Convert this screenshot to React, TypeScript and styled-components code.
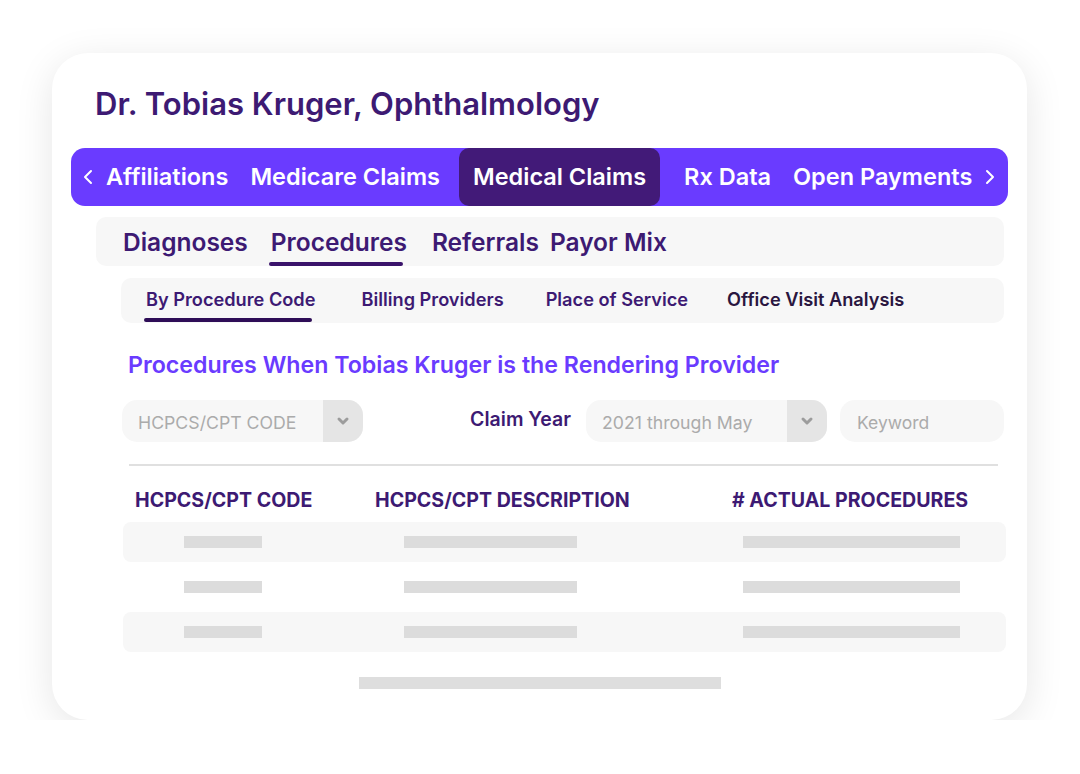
import styled, { createGlobalStyle } from "styled-components";

const GlobalStyle = createGlobalStyle`
  html, body {
    margin: 0;
    padding: 0;
    background: #ffffff;
    font-family: Inter, "Noto Sans", sans-serif;
  }
  * { box-sizing: border-box; }
`;

const mainTabs = [
  { label: "Affiliations" },
  { label: "Medicare Claims" },
  { label: "Medical Claims", active: true },
  { label: "Rx Data" },
  { label: "Open Payments" },
];

const subTabs = [
  { label: "Diagnoses", space: 23 },
  { label: "Procedures", active: true, space: 25 },
  { label: "Referrals", space: 11 },
  { label: "Payor Mix", space: 0 },
];

const innerTabs = [
  { label: "By Procedure Code", active: true, space: 46 },
  { label: "Billing Providers", space: 42 },
  { label: "Place of Service", space: 39 },
  { label: "Office Visit Analysis", dark: true, space: 0 },
];

const rows = [true, false, true];

function Chevron({ dir }: { dir: "left" | "right" }) {
  return (
    <svg width="12" height="18" viewBox="0 0 12 18">
      <polyline
        points={dir === "left" ? "9,3 3,9 9,15" : "3,3 9,9 3,15"}
        fill="none"
        stroke="#fff"
        strokeWidth="2"
        strokeLinecap="round"
        strokeLinejoin="round"
      />
    </svg>
  );
}

function Caret() {
  return (
    <svg width="14" height="10" viewBox="0 0 14 10">
      <polyline
        points="3,3 7,7 11,3"
        fill="none"
        stroke="#9c9c9c"
        strokeWidth="3"
        strokeLinecap="round"
        strokeLinejoin="round"
      />
    </svg>
  );
}

function App() {
  return (
    <>
      <GlobalStyle />
      <Card>
        <Title>Dr. Tobias Kruger, Ophthalmology</Title>

        <MainBar>
          <Arrow>
            <Chevron dir="left" />
          </Arrow>
          {mainTabs.map((t) => (
            <MainTab key={t.label} $active={!!t.active}>
              {t.label}
            </MainTab>
          ))}
          <Arrow>
            <Chevron dir="right" />
          </Arrow>
        </MainBar>

        <SubBar>
          {subTabs.map((t) => (
            <SubTab key={t.label} $active={!!t.active} $space={t.space}>
              {t.label}
            </SubTab>
          ))}
        </SubBar>

        <InnerBar>
          {innerTabs.map((t) => (
            <InnerTab
              key={t.label}
              $active={!!t.active}
              $dark={!!t.dark}
              $space={t.space}
            >
              {t.label}
            </InnerTab>
          ))}
        </InnerBar>

        <Heading>Procedures When Tobias Kruger is the Rendering Provider</Heading>

        <Filters>
          <Select>
            <SelectText>HCPCS/CPT CODE</SelectText>
            <SelectButton>
              <Caret />
            </SelectButton>
          </Select>
          <FilterGroup>
            <FilterLabel>Claim Year</FilterLabel>
            <Select>
              <SelectText>2021 through May</SelectText>
              <SelectButton>
                <Caret />
              </SelectButton>
            </Select>
            <Keyword>Keyword</Keyword>
          </FilterGroup>
        </Filters>

        <Divider />

        <Table>
          <HeaderRow>
            <HeadCell>HCPCS/CPT CODE</HeadCell>
            <HeadCell>HCPCS/CPT DESCRIPTION</HeadCell>
            <HeadCell>#&nbsp;ACTUAL PROCEDURES</HeadCell>
          </HeaderRow>
          {rows.map((shaded, i) => (
            <Row key={i} $shaded={shaded}>
              <Bar $offset={61} $w={78} />
              <Bar $offset={41} $w={173} />
              <Bar $offset={23} $w={217} />
            </Row>
          ))}
        </Table>

        <Pager />
      </Card>
    </>
  );
}

export default App;

const Card = styled.div`
  margin: 53px 0 0 52px;
  width: 975px;
  height: 667px;
  padding: 33px 19px 0;
  background: #fff;
  border-radius: 36px;
  box-shadow: 0 8px 38px rgba(0, 0, 0, 0.1);
  display: flex;
  flex-direction: column;
`;

const Title = styled.h1`
  margin: 0 0 26px 24px;
  font-size: 31px;
  line-height: 36px;
  font-weight: 600;
  color: #3d1a73;
`;

const MainBar = styled.div`
  display: flex;
  align-items: stretch;
  height: 58px;
  padding: 0 10px;
  background: #6a3bff;
  border-radius: 14px;
  white-space: nowrap;
`;

const Arrow = styled.div`
  flex-shrink: 0;
  display: flex;
  align-items: center;
  padding: 0 1px;
`;

const MainTab = styled.div<{ $active: boolean }>`
  flex-shrink: 0;
  display: flex;
  align-items: center;
  padding: 0 ${(p) => (p.$active ? "14px" : "11px")} 2px;
  margin: ${(p) => (p.$active ? "0 13px 0 8px" : "0")};
  font-size: 23.5px;
  font-weight: 600;
  color: #fff;
  border-radius: 10px;
  background: ${(p) => (p.$active ? "#421a78" : "transparent")};
`;

const SubBar = styled.div`
  display: flex;
  align-items: stretch;
  height: 49px;
  margin: 11px 4px 0 25px;
  padding: 0 0 0 27px;
  background: #f7f7f7;
  border-radius: 10px;
  white-space: nowrap;
`;

const SubTab = styled.div<{ $active: boolean; $space: number }>`
  position: relative;
  display: flex;
  align-items: center;
  margin-right: ${(p) => p.$space}px;
  font-size: 24.5px;
  font-weight: 600;
  color: #3d1a73;

  &::after {
    content: "";
    display: ${(p) => (p.$active ? "block" : "none")};
    position: absolute;
    left: -2px;
    right: 4px;
    bottom: 0;
    height: 4px;
    border-radius: 2px;
    background: #3a136b;
  }
`;

const InnerBar = styled.div`
  display: flex;
  align-items: stretch;
  height: 45px;
  margin: 12px 4px 0 50px;
  padding: 0 0 0 25px;
  background: #f7f7f7;
  border-radius: 10px;
  white-space: nowrap;
`;

const InnerTab = styled.div<{ $active: boolean; $dark: boolean; $space: number }>`
  position: relative;
  display: flex;
  align-items: center;
  padding-bottom: 3px;
  margin-right: ${(p) => p.$space}px;
  font-size: 18.2px;
  font-weight: 600;
  color: ${(p) => (p.$dark ? "#2a1640" : "#3d1a73")};

  &::after {
    content: "";
    display: ${(p) => (p.$active ? "block" : "none")};
    position: absolute;
    left: -2px;
    right: 3px;
    bottom: 1px;
    height: 4px;
    border-radius: 2px;
    background: #2e0d57;
  }
`;

const Heading = styled.h2`
  margin: 28px 0 0 57px;
  font-size: 23.2px;
  line-height: 28px;
  font-weight: 600;
  color: #6a3bff;
`;

const Filters = styled.div`
  display: flex;
  justify-content: space-between;
  align-items: center;
  margin: 21px 4px 0 51px;
`;

const FilterGroup = styled.div`
  display: flex;
  align-items: center;
  gap: 13px;
`;

const FilterLabel = styled.span`
  margin: -4px 2px 0 0;
  font-size: 19.5px;
  font-weight: 600;
  color: #3d1a73;
`;

const Select = styled.div`
  display: flex;
  width: 241px;
  height: 42px;
  border-radius: 15px;
  overflow: hidden;
  background: #f7f7f7;
`;

const SelectText = styled.span`
  flex: 1;
  display: flex;
  align-items: center;
  padding: 3px 0 0 16px;
  font-size: 17.7px;
  color: #ababab;
`;

const SelectButton = styled.span`
  display: flex;
  align-items: center;
  justify-content: center;
  width: 40px;
  background: #e5e5e5;
`;

const Keyword = styled.div`
  display: flex;
  align-items: center;
  width: 164px;
  height: 42px;
  padding: 3px 0 0 17px;
  border-radius: 15px;
  background: #f7f7f7;
  font-size: 17.5px;
  color: #ababab;
`;

const Divider = styled.hr`
  margin: 22px 10px 0 58px;
  border: none;
  height: 2px;
  background: #e0e0e0;
`;

const Table = styled.div`
  display: flex;
  flex-direction: column;
  gap: 5px;
  margin: 22px 2px 0 52px;
`;

const columns = "240px 357px 1fr";

const HeaderRow = styled.div`
  display: grid;
  grid-template-columns: ${columns};
  height: 24px;
  margin-bottom: 5px;
  align-items: center;
`;

const HeadCell = styled.div`
  padding-left: 12px;
  font-size: 19.6px;
  font-weight: 650;
  color: #3d1a73;
`;

const Row = styled.div<{ $shaded: boolean }>`
  display: grid;
  grid-template-columns: ${columns};
  align-items: center;
  height: 40px;
  border-radius: 8px;
  background: ${(p) => (p.$shaded ? "#f7f7f7" : "transparent")};
`;

const Bar = styled.div<{ $offset: number; $w: number }>`
  margin-left: ${(p) => p.$offset}px;
  width: ${(p) => p.$w}px;
  height: 12px;
  background: #dcdcdc;
`;

const Pager = styled.div`
  align-self: center;
  margin-top: 25px;
  width: 362px;
  height: 12px;
  background: #dedede;
`;
